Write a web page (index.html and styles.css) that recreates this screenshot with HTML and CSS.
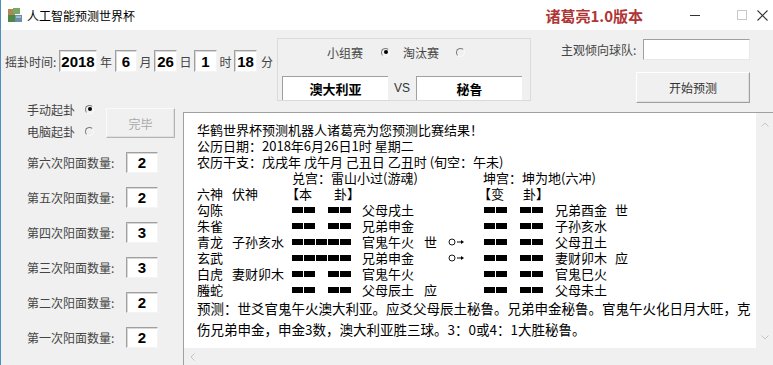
FILE: index.html
```html
<!DOCTYPE html>
<html lang="zh">
<head>
    <meta charset="UTF-8">
    <title>人工智能预测世界杯</title>
    <link rel="stylesheet" href="styles.css">
</head>
<body>
<div class="window">
    <div class="titlebar">
        <svg class="app-icon" width="16" height="16" viewBox="0 0 16 16">
            <rect x="1" y="2" width="7" height="7" fill="#b08659"/>
            <rect x="6" y="1" width="7" height="6" fill="#79a860"/>
            <rect x="1" y="8" width="7" height="7" fill="#4f8a45"/>
            <rect x="8" y="8" width="7" height="7" fill="#6d8fae"/>
            <rect x="9" y="9" width="5" height="2" fill="#9fb8cf"/>
        </svg>
        <span class="title">人工智能预测世界杯</span>
        <span class="version">诸葛亮1.0版本</span>
        <div class="win-controls">
            <svg class="ctl-min" width="10" height="10" viewBox="0 0 10 10"><line x1="0" y1="5.5" x2="10" y2="5.5" stroke="#333" stroke-width="1"/></svg>
            <svg class="ctl-max" width="10" height="10" viewBox="0 0 10 10"><rect x="0.5" y="0.5" width="9" height="9" fill="none" stroke="#c8c8c8"/></svg>
            <svg class="ctl-close" width="11" height="11" viewBox="0 0 11 11"><path d="M0.5 0.5 L10.5 10.5 M10.5 0.5 L0.5 10.5" stroke="#333" stroke-width="1.1"/></svg>
        </div>
    </div>

    <div class="client">
        <div class="top">
            <div class="time-row">
                <span class="time-label">摇卦时间:</span>
                <span class="value-box w-year">2018</span>
                <span class="unit u-year">年</span>
                <span class="value-box w-small">6</span>
                <span class="unit">月</span>
                <span class="value-box w-mid">26</span>
                <span class="unit">日</span>
                <span class="value-box w-mid">1</span>
                <span class="unit">时</span>
                <span class="value-box w-mid">18</span>
                <span class="unit u-min">分</span>
            </div>

            <div class="match-group">
                <div class="stage-row">
                    <span class="label">小组赛</span>
                    <span class="radio checked r-group"></span>
                    <span class="label l-knock">淘汰赛</span>
                    <span class="radio r-knock"></span>
                </div>
                <div class="team-row">
                    <span class="team-box">澳大利亚</span>
                    <span class="vs">VS</span>
                    <span class="team-box">秘鲁</span>
                </div>
            </div>

            <div class="side">
                <div class="fav-row">
                    <span class="label fav-label">主观倾向球队:</span>
                    <span class="fav-input"></span>
                </div>
                <div class="btn start-btn">开始预测</div>
            </div>
        </div>

        <div class="bottom">
            <div class="left-panel">
                <div class="mode-area">
                    <div class="mode-list">
                        <div class="mode"><span class="label">手动起卦</span><span class="radio checked"></span></div>
                        <div class="mode"><span class="label">电脑起卦</span><span class="radio"></span></div>
                    </div>
                    <div class="btn done-btn">完毕</div>
                </div>
                <div class="counts">
                    <div class="count-row"><span class="label count-label">第六次阳面数量:</span><span class="value-box count-box">2</span></div>
                    <div class="count-row"><span class="label count-label">第五次阳面数量:</span><span class="value-box count-box">2</span></div>
                    <div class="count-row"><span class="label count-label">第四次阳面数量:</span><span class="value-box count-box">3</span></div>
                    <div class="count-row"><span class="label count-label">第三次阳面数量:</span><span class="value-box count-box">3</span></div>
                    <div class="count-row"><span class="label count-label">第二次阳面数量:</span><span class="value-box count-box">2</span></div>
                    <div class="count-row"><span class="label count-label">第一次阳面数量:</span><span class="value-box count-box">2</span></div>
                </div>
            </div>

            <div class="result-box">
                <div class="result-text">
                    <div class="line">华鹤世界杯预测机器人诸葛亮为您预测比赛结果！</div>
                    <div class="line">公历日期：2018年6月26日1时 星期二</div>
                    <div class="line">农历干支：戊戌年 戊午月 己丑日 乙丑时 (旬空：午未)</div>

                    <div class="hex-row">
                        <span></span><span></span>
                        <span class="span-4">兑宫：雷山小过(游魂)</span>
                        <span class="span-3">坤宫：坤为地(六冲)</span>
                    </div>
                    <div class="hex-row">
                        <span>六神</span><span>伏神</span>
                        <span class="gua-head"><b>【本</b><b class="gua-end">卦】</b></span>
                        <span></span><span></span><span></span>
                        <span class="gua-head"><b>【变</b><b class="gua-end2">卦】</b></span>
                    </div>

                    <div class="hex-row">
                        <span>勾陈</span><span></span>
                        <span class="yao yin"><i></i><i></i><i></i><i></i><i></i></span>
                        <span>父母戌土</span><span></span><span></span>
                        <span class="yao yin"><i></i><i></i><i></i><i></i><i></i></span>
                        <span>兄弟酉金</span><span>世</span>
                    </div>
                    <div class="hex-row">
                        <span>朱雀</span><span></span>
                        <span class="yao yin"><i></i><i></i><i></i><i></i><i></i></span>
                        <span>兄弟申金</span><span></span><span></span>
                        <span class="yao yin"><i></i><i></i><i></i><i></i><i></i></span>
                        <span>子孙亥水</span><span></span>
                    </div>
                    <div class="hex-row">
                        <span>青龙</span><span>子孙亥水</span>
                        <span class="yao"><i></i><i></i><i></i><i></i><i></i></span>
                        <span>官鬼午火</span><span>世</span>
                        <span class="move"><svg width="16" height="8" viewBox="0 0 16 8"><circle cx="4" cy="4" r="3" fill="none" stroke="#000" stroke-width="0.9"/><line x1="9" y1="4" x2="14" y2="4" stroke="#000" stroke-width="1"/><path d="M13 2 L16 4 L13 6 Z" fill="#000"/></svg></span>
                        <span class="yao yin"><i></i><i></i><i></i><i></i><i></i></span>
                        <span>父母丑土</span><span></span>
                    </div>
                    <div class="hex-row">
                        <span>玄武</span><span></span>
                        <span class="yao"><i></i><i></i><i></i><i></i><i></i></span>
                        <span>兄弟申金</span><span></span>
                        <span class="move"><svg width="16" height="8" viewBox="0 0 16 8"><circle cx="4" cy="4" r="3" fill="none" stroke="#000" stroke-width="0.9"/><line x1="9" y1="4" x2="14" y2="4" stroke="#000" stroke-width="1"/><path d="M13 2 L16 4 L13 6 Z" fill="#000"/></svg></span>
                        <span class="yao yin"><i></i><i></i><i></i><i></i><i></i></span>
                        <span>妻财卯木</span><span>应</span>
                    </div>
                    <div class="hex-row">
                        <span>白虎</span><span>妻财卯木</span>
                        <span class="yao yin"><i></i><i></i><i></i><i></i><i></i></span>
                        <span>官鬼午火</span><span></span><span></span>
                        <span class="yao yin"><i></i><i></i><i></i><i></i><i></i></span>
                        <span>官鬼巳火</span><span></span>
                    </div>
                    <div class="hex-row">
                        <span>螣蛇</span><span></span>
                        <span class="yao yin"><i></i><i></i><i></i><i></i><i></i></span>
                        <span>父母辰土</span><span>应</span><span></span>
                        <span class="yao yin"><i></i><i></i><i></i><i></i><i></i></span>
                        <span>父母未土</span><span></span>
                    </div>

                    <div class="predict">预测：世爻官鬼午火澳大利亚。应爻父母辰土秘鲁。兄弟申金秘鲁。官鬼午火化日月大旺，克<br>伤兄弟申金，申金3数，澳大利亚胜三球。3：0或4：1大胜秘鲁。</div>
                </div>
                <div class="vscroll">
                    <svg width="8" height="5" viewBox="0 0 8 5"><path d="M0.5 4.5 L4 1 L7.5 4.5" fill="none" stroke="#c4c4c4"/></svg>
                    <svg width="8" height="5" viewBox="0 0 8 5"><path d="M0.5 0.5 L4 4 L7.5 0.5" fill="none" stroke="#c4c4c4"/></svg>
                </div>
                <div class="hscroll">
                    <svg width="5" height="8" viewBox="0 0 5 8"><path d="M4.5 0.5 L1 4 L4.5 7.5" fill="none" stroke="#c4c4c4"/></svg>
                </div>
            </div>
        </div>
    </div>
</div>
</body>
</html>
```

FILE: styles.css
```css
* {
    box-sizing: border-box;
}
body {
    margin: 0;
    background-color: #f0f0f0;
    font-family: "Noto Sans CJK SC", sans-serif;
    color: #000;
}
.window {
    width: 773px;
    height: 365px;
    overflow: hidden;
    border-left: 1px solid #4a8fbf;
    background-color: #f0f0f0;
}

/* title bar */
.titlebar {
    height: 30px;
    background-color: #fff;
    display: flex;
    align-items: center;
}
.app-icon {
    margin-left: 6px;
}
.title {
    margin-left: 4px;
    font-size: 12px;
}
.version {
    margin-left: auto;
    margin-right: 47px;
    font-size: 15px;
    font-weight: bold;
    color: #b03636;
}
.win-controls {
    display: flex;
    align-items: center;
    margin-right: 5px;
}
.ctl-min { margin-right: 37px; }
.ctl-max { margin-right: 10px; }

/* shared bits */
.label {
    font-size: 12px;
    color: #444;
    white-space: nowrap;
}
.value-box {
    display: flex;
    justify-content: center;
    align-items: center;
    height: 22px;
    background-color: #fff;
    border: 1px solid;
    border-color: #a0a0a0 #f4f4f4 #f4f4f4 #a0a0a0;
    box-shadow: inset 1px 1px 0 #d8d8d8;
    font-family: "Liberation Sans", sans-serif;
    font-weight: bold;
    font-size: 15px;
}
.radio {
    display: inline-block;
    position: relative;
    width: 9px;
    height: 9px;
    border-radius: 50%;
    border: 1px solid;
    border-color: #7a7a7a #fafafa #fafafa #7a7a7a;
    background-color: #f0f0f0;
}
.radio.checked::after {
    content: "";
    position: absolute;
    left: 1.5px;
    top: 1.5px;
    width: 4px;
    height: 4px;
    border-radius: 50%;
    background-color: #000;
}
.btn {
    display: flex;
    justify-content: center;
    align-items: center;
    font-size: 12px;
    background-color: #f0f0f0;
    border: 1px solid;
    border-color: #fff #a0a0a0 #a0a0a0 #fff;
    box-shadow: inset -1px -1px 0 #e0e0e0;
}

/* top area */
.top {
    display: flex;
    height: 70px;
}
.time-row {
    display: flex;
    align-items: center;
    width: 272px;
    height: 22px;
    margin: 20px 0 0 4px;
}
.time-label {
    width: 54px;
    font-size: 12px;
    color: #444;
}
.w-year { width: 38px; }
.w-small { width: 22px; }
.w-mid { width: 23px; }
.unit {
    width: 17px;
    text-align: center;
    font-size: 12px;
    color: #444;
}
.u-year { width: 18px; }
.u-min { width: 20px; }

.match-group {
    width: 254px;
    height: 63px;
    margin-top: 8px;
    border: 1px solid #dadada;
}
.stage-row {
    display: flex;
    align-items: center;
    height: 26px;
    padding-left: 49px;
}
.r-group { margin-left: 18px; }
.l-knock { margin-left: 13px; }
.r-knock { margin-left: 17px; }
.team-row {
    display: flex;
    align-items: center;
    margin-top: 11px;
    padding-left: 4px;
}
.team-box {
    width: 106px;
    height: 24px;
    display: flex;
    justify-content: center;
    align-items: center;
    background-color: #fff;
    border-top: 1px solid #a0a0a0;
    border-left: 1px solid #a0a0a0;
    font-size: 13px;
    font-weight: bold;
}
.vs {
    width: 28px;
    text-align: center;
    font-family: "Liberation Sans", sans-serif;
    font-size: 12px;
    color: #333;
}

.side {
    width: 189px;
    margin-left: 30px;
}
.fav-row {
    display: flex;
    align-items: center;
    margin-top: 9px;
}
.fav-label {
    width: 82px;
}
.fav-input {
    width: 107px;
    height: 21px;
    background-color: #fff;
    border: 1px solid;
    border-color: #a0a0a0 #e8e8e8 #e8e8e8 #a0a0a0;
}
.start-btn {
    width: 114px;
    height: 31px;
    margin: 12px 0 0 auto;
    color: #333;
}

/* bottom area */
.bottom {
    display: flex;
    height: 265px;
}
.left-panel {
    width: 182px;
}
.mode-area {
    display: flex;
    padding-left: 26px;
}
.mode {
    display: flex;
    align-items: center;
    height: 18px;
}
.mode + .mode {
    margin-top: 4px;
}
.mode .radio {
    margin-left: 10px;
}
.done-btn {
    width: 69px;
    height: 30px;
    margin: 8px 0 0 12px;
    color: #a8a8a8;
    border-color: #fafafa #b4b4b4 #b4b4b4 #fafafa;
}
.counts {
    margin-top: 12px;
    padding-left: 26px;
}
.count-row {
    display: flex;
    align-items: center;
    height: 21px;
}
.count-row + .count-row {
    margin-top: 14px;
}
.count-label {
    width: 99px;
}
.count-box {
    width: 32px;
    height: 21px;
}

/* result text box */
.result-box {
    flex: 1;
    margin-top: 12px;
    display: grid;
    grid-template-columns: 1fr 17px;
    grid-template-rows: 235px 17px;
    background-color: #fff;
    border-top: 1px solid #a0a0a0;
    border-left: 1px solid #a0a0a0;
}
.result-text {
    padding: 9px 0 0 13px;
    font-size: 13px;
    white-space: nowrap;
    overflow: hidden;
}
.line {
    height: 16px;
    line-height: 16px;
}
.hex-row {
    display: grid;
    grid-template-columns: 35px 60px 70px 62px 24px 36px 71px 60px auto;
    align-items: center;
    height: 16px;
    line-height: 16px;
}
.span-4 { grid-column: span 4; }
.span-3 { grid-column: span 3; margin-left: -1px; }
.gua-head b {
    font-weight: normal;
}
.gua-head b:first-child {
    margin-left: -6px;
}
.gua-end { margin-left: 22px; }
.gua-end2 { margin-left: 19px; }
.yao {
    display: flex;
    gap: 1px;
}
.yao i {
    width: 11px;
    height: 6px;
    background-color: #000;
}
.yin i:nth-child(3) {
    visibility: hidden;
}
.move {
    display: flex;
    align-items: center;
}
.predict {
    font-size: 13.5px;
    line-height: 21px;
}
.vscroll {
    background-color: #f0f0f0;
    display: flex;
    flex-direction: column;
    justify-content: space-between;
    align-items: center;
    padding: 9px 0 8px;
}
.hscroll {
    grid-column: 1 / 3;
    background-color: #f0f0f0;
    display: flex;
    align-items: center;
    padding-left: 6px;
}
```
